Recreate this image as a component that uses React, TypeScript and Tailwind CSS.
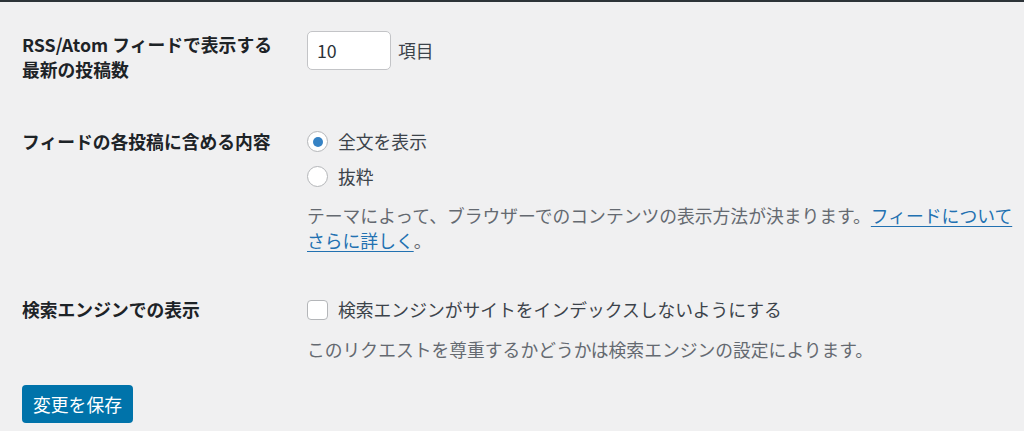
export default function App() {
  const font = { fontFamily: '"Noto Sans CJK JP", "Noto Sans", sans-serif' }

  return (
    <div
      className="w-[1024px] h-[431px] overflow-hidden bg-[#f0f0f1] border-t-2 border-[#2c3338] text-[17.8px] leading-[25px] text-[#3c434a]"
      style={font}
    >
      <div className="pl-[22px] pt-[30px]">
        {/* 投稿数 */}
        <div className="flex">
          <div className="w-[285px] font-bold text-[#1d2327]">
            RSS/Atom フィードで表示する
            <br />
            最新の投稿数
          </div>
          <div className="flex items-center h-[39px] -mt-[1px]">
            <div className="w-[84px] h-[39px] bg-white border border-[#c3c4c7] rounded-[5px] px-[9px] flex items-center text-[#2c3338]">
              10
            </div>
            <span className="ml-[7px]">項目</span>
          </div>
        </div>

        {/* フィードの内容 */}
        <div className="flex mt-[47px]">
          <div className="w-[285px] font-bold text-[#1d2327]">フィードの各投稿に含める内容</div>
          <div className="flex flex-col">
            <label className="flex items-center h-[25px]">
              <span className="w-[21px] h-[21px] rounded-full bg-white border border-[#b4b6b9] flex items-center justify-center">
                <span className="w-[10px] h-[10px] rounded-full bg-[#3582c4]" />
              </span>
              <span className="ml-[10px]">全文を表示</span>
            </label>
            <label className="flex items-center h-[25px] mt-[10px]">
              <span className="w-[21px] h-[21px] rounded-full bg-white border border-[#b4b6b9]" />
              <span className="ml-[10px]">抜粋</span>
            </label>
            <p className="mt-[14px] text-[#646970] whitespace-nowrap">
              テーマによって、ブラウザーでのコンテンツの表示方法が決まります。
              <a className="text-[#2271b1] underline underline-offset-[3px]">
                フィードについて
                <br />
                さらに詳しく
              </a>
              。
            </p>
          </div>
        </div>

        {/* 検索エンジン */}
        <div className="flex mt-[44px]">
          <div className="w-[285px] font-bold text-[#1d2327]">検索エンジンでの表示</div>
          <div className="flex flex-col">
            <label className="flex items-center h-[25px]">
              <span className="w-[21px] h-[20px] rounded-[4px] bg-white border border-[#b4b6b9]" />
              <span className="ml-[10px]">検索エンジンがサイトをインデックスしないようにする</span>
            </label>
            <p className="mt-[15px] text-[#646970]">
              このリクエストを尊重するかどうかは検索エンジンの設定によります。
            </p>
          </div>
        </div>

        <button className="mt-[23px] w-[111px] h-[38px] rounded-[4px] bg-[#0073aa] text-white flex items-center justify-center">
          変更を保存
        </button>
      </div>
    </div>
  )
}
